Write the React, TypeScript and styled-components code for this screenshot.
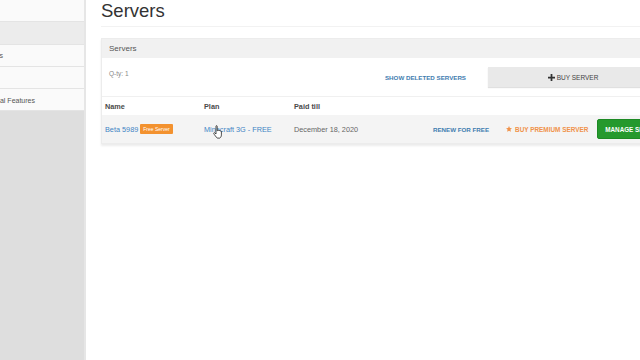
import styled, { createGlobalStyle } from 'styled-components';

// SECTION: Styles

const Global = createGlobalStyle`
  html, body {
    margin: 0;
    padding: 0;
    background: #fff;
    font-family: "Liberation Sans", Arial, sans-serif;
  }
`;

const Page = styled.div`
  display: flex;
  width: 640px;
  height: 360px;
  overflow: hidden;
`;

const Sidebar = styled.nav`
  width: 84px;
  flex-shrink: 0;
  background: #dedede;
  border-right: 2px solid #e6e6e6;
  overflow: hidden;
`;

const NavItem = styled.div<{ $active?: boolean }>`
  box-sizing: border-box;
  height: 22.3px;
  border-bottom: 1px solid #e4e4e4;
  background: ${(p) => (p.$active ? '#ececec' : '#fafafa')};
  display: flex;
  align-items: center;
  justify-content: flex-end;
  font-size: 7px;
  color: #555;
  white-space: nowrap;
  overflow: hidden;
`;

const NavText = styled.span<{ $shift: number }>`
  margin-right: ${(p) => p.$shift}px;
  padding-top: 1px;
`;

const Main = styled.main`
  flex: 1;
  padding-left: 15px;
  overflow: hidden;
`;

const Title = styled.h1`
  margin: 0;
  height: 26px;
  font-size: 18.5px;
  font-weight: 400;
  color: #333;
  line-height: 22px;
  border-bottom: 1px solid #f2f2f2;
`;

const Panel = styled.section`
  margin-top: 11px;
  width: 580px;
  border: 1px solid #ececec;
  border-right: none;
  box-shadow: 0 2px 2px rgba(0, 0, 0, 0.08);
`;

const PanelHeader = styled.div`
  height: 19px;
  background: #f1f1f1;
  padding-left: 7px;
  font-size: 8px;
  color: #555;
  line-height: 19px;
`;

const Toolbar = styled.div`
  display: flex;
  align-items: flex-start;
  padding: 9px 0 9px 7px;
  border-bottom: 1px solid #f0f0f0;
`;

const Qty = styled.div`
  font-size: 6.5px;
  color: #888;
  padding-top: 3px;
  flex: 1;
`;

const LinkButton = styled.div<{ $color: string }>`
  font-size: 6.2px;
  font-weight: 700;
  color: ${(p) => p.$color};
  white-space: nowrap;
  display: flex;
  align-items: center;
  gap: 3px;
`;

const DeletedLink = styled(LinkButton)`
  height: 20px;
  margin-right: 22px;
`;

const PremiumLink = styled(LinkButton)`
  margin-left: 17px;
  font-size: 6.4px;
`;

const BuyButton = styled.div`
  width: 170px;
  height: 20px;
  background: #e9e9e9;
  box-shadow: 0 1px 1px rgba(0, 0, 0, 0.12);
  display: flex;
  align-items: center;
  justify-content: center;
  gap: 2px;
  font-size: 6.5px;
  color: #444;
  margin-right: 24px;
`;

const TableRow = styled.div<{ $body?: boolean }>`
  display: flex;
  align-items: center;
  height: ${(p) => (p.$body ? '28px' : '18px')};
  padding-left: 3px;
  background: ${(p) => (p.$body ? '#f4f4f4' : '#fff')};
  font-size: 7.3px;
  font-weight: ${(p) => (p.$body ? 400 : 700)};
  color: ${(p) => (p.$body ? '#666' : '#4a4a4a')};
  white-space: nowrap;
`;

const Cell = styled.div<{ $width: number }>`
  width: ${(p) => p.$width}px;
  flex-shrink: 0;
  display: flex;
  align-items: center;
  gap: 2px;
`;

const Link = styled.span`
  color: #3f84c4;
`;

const Badge = styled.span`
  background: #f3922f;
  color: #fff;
  font-size: 5px;
  padding: 2px 3px;
  border-radius: 1px;
`;

const Actions = styled.div`
  display: flex;
  align-items: center;
  margin-left: 75px;
`;

const ManageButton = styled.div`
  height: 20px;
  width: 62px;
  margin-left: 9px;
  background: #25992d;
  border: 1px solid #1d8a24;
  border-radius: 2px;
  color: #fff;
  font-size: 6.3px;
  font-weight: 700;
  display: flex;
  align-items: center;
  padding-left: 7px;
  box-sizing: border-box;
`;

const Cursor = styled.svg`
  position: absolute;
  left: 213px;
  top: 125px;
`;

// !SECTION

// SECTION: Main

const App = () => (
  <>
    <Global />
    <Page>
      <Sidebar>
        <NavItem />
        <NavItem $active />
        <NavItem>
          <NavText $shift={81}>Servers</NavText>
        </NavItem>
        <NavItem />
        <NavItem>
          <NavText $shift={49}>Additional Features</NavText>
        </NavItem>
      </Sidebar>
      <Main>
        <Title>Servers</Title>
        <Panel>
          <PanelHeader>Servers</PanelHeader>
          <Toolbar>
            <Qty>Q-ty: 1</Qty>
            <DeletedLink $color="#3f7db0">SHOW DELETED SERVERS</DeletedLink>
            <BuyButton>
              <svg width="7" height="7" viewBox="0 0 8 8">
                <path d="M3 0h2v3h3v2H5v3H3V5H0V3h3z" fill="#333" />
              </svg>
              BUY SERVER
            </BuyButton>
          </Toolbar>
          <TableRow>
            <Cell $width={99}>Name</Cell>
            <Cell $width={90}>Plan</Cell>
            <Cell $width={90}>Paid till</Cell>
          </TableRow>
          <TableRow $body>
            <Cell $width={99}>
              <Link>Beta 5989</Link>
              <Badge>Free Server</Badge>
            </Cell>
            <Cell $width={90}>
              <Link>Minecraft 3G - FREE</Link>
            </Cell>
            <Cell $width={64}>December 18, 2020</Cell>
            <Actions>
              <LinkButton $color="#3f7db0">RENEW FOR FREE</LinkButton>
              <PremiumLink $color="#f0924a">
                <svg width="6" height="6" viewBox="0 0 10 10">
                  <path
                    d="M5 0l1.5 3.2 3.5.4-2.6 2.4.7 3.5L5 7.8 1.9 9.5l.7-3.5L0 3.6l3.5-.4z"
                    fill="#f0924a"
                  />
                </svg>
                BUY PREMIUM SERVER
              </PremiumLink>
              <ManageButton>MANAGE SERVER</ManageButton>
            </Actions>
          </TableRow>
        </Panel>
      </Main>
      <Cursor width="11" height="14" viewBox="0 0 11 14">
        <path
          d="M3 1.2c0-.7 1.2-.7 1.2 0v4.6l.4-.1c.1-.6 1.1-.6 1.2 0l.1.2c.2-.6 1.1-.5 1.2.1l.1.2c.3-.5 1.2-.3 1.2.3v3.4c0 1.4-.7 2.6-1.6 3.2H4.2C3.4 12.3 1.3 9.6.8 8.7c-.4-.7.4-1.3 1-.8L3 9V1.2z"
          fill="#fff"
          stroke="#222"
          strokeWidth="0.8"
        />
      </Cursor>
    </Page>
  </>
);

// /SECTION

export default App;
